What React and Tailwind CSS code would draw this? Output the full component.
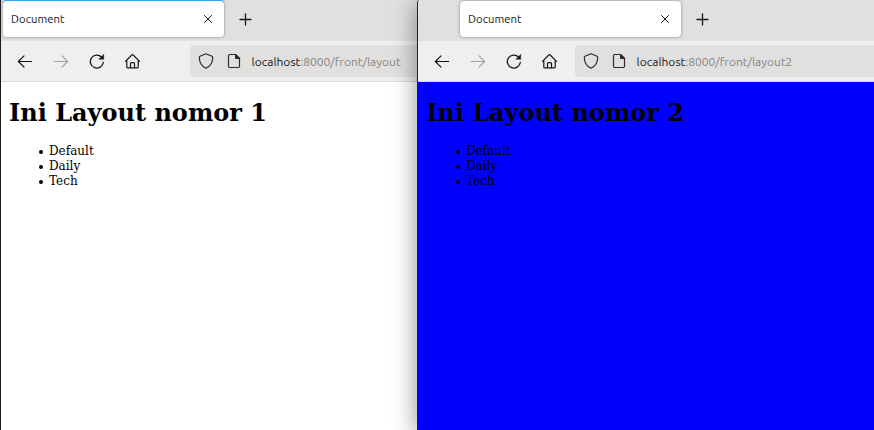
const stroke = {
  fill: 'none',
  stroke: 'currentColor',
  strokeWidth: 1.2,
  strokeLinecap: 'round',
  strokeLinejoin: 'round',
};

function Arrow({ className }) {
  return (
    <svg className={className} width="16" height="16" viewBox="0 0 16 16" {...stroke}>
      <path d="M1.5 8.5H14.7M7 2.9L1.4 8.5L7 14.1" />
    </svg>
  );
}

function Reload() {
  return (
    <svg width="16" height="16" viewBox="0 0 16 16" {...stroke} strokeWidth="1.3">
      <path d="M12.5 4A6.5 6.5 0 1 0 14.3 9.5" />
      <path d="M14.7 1.6V6.2H10.1Z" fill="currentColor" strokeWidth="0.5" />
    </svg>
  );
}

function Home() {
  return (
    <svg className="-ml-px" width="16" height="16" viewBox="0 0 16 16" {...stroke}>
      <path d="M1.5 8.3L7.8 2Q8.5 1.4 9.2 2L15.5 8.3M2.8 7.3V14Q2.8 14.9 3.7 14.9H13.3Q14.2 14.9 14.2 14V7.3" />
      <path d="M6.5 14.7V10.6Q6.5 9.6 7.5 9.6H9.5Q10.5 9.6 10.5 10.6V14.7" />
    </svg>
  );
}

function Shield() {
  return (
    <svg width="16" height="16" viewBox="0 0 16 16" {...stroke}>
      <path d="M8 .8L14 3.2Q14.7 3.5 14.7 4.3C14.7 9 12.5 13.2 8 15.2C3.5 13.2 1.3 9 1.3 4.3Q1.3 3.5 2 3.2Z" />
    </svg>
  );
}

function Page() {
  return (
    <svg width="16" height="16" viewBox="0 0 16 16" {...stroke}>
      <path d="M9.5 1.5H3.7Q2.5 1.5 2.5 2.7V13.3Q2.5 14.5 3.7 14.5H12.3Q13.5 14.5 13.5 13.3V5.5Z" />
      <path d="M9.5 1.5V5.5H13.5Z" fill="currentColor" strokeWidth="1" />
    </svg>
  );
}

function TabStrip({ right }) {
  return (
    <div className={`flex h-[41px] shrink-0 bg-[#e1e0df] ${right ? 'pl-[42px]' : 'pl-[2px]'}`}>
      <div
        className={`flex w-[221px] shrink-0 items-center justify-between rounded-[4px] bg-white pl-2 pr-[11px] shadow-[0_0_3px_rgba(0,0,0,0.45)] ${
          right ? 'mt-px h-[36px]' : 'h-[37px] border-t border-[#35a3f5]'
        }`}
      >
        <span className="-mt-px font-['Ubuntu','Noto_Sans',sans-serif] text-[11.3px] leading-4 tracking-[0.05px] text-[#15141a]">
          Document
        </span>
        <svg className="-mt-px" width="10" height="10" viewBox="0 0 10 10" {...stroke} strokeWidth="1">
          <path d="M1.5 1.5L8.5 8.5M8.5 1.5L1.5 8.5" />
        </svg>
      </div>
      <svg className="ml-[15px] mt-[13px] shrink-0" width="13" height="13" viewBox="0 0 13 13" {...stroke} strokeWidth="1.3">
        <path d="M6.5 1V12M1 6.5H12" />
      </svg>
    </div>
  );
}

function Toolbar({ right, path }) {
  return (
    <div className="flex h-[41px] shrink-0 items-center border-b border-[#dcdbda] bg-[#f0efee] pl-4">
      <div className="flex shrink-0 gap-5">
        <Arrow />
        <Arrow className="-scale-x-100 text-[#a2a1a1]" />
        <Reload />
        <Home />
      </div>
      <div
        className={`flex h-8 flex-1 items-center overflow-hidden rounded-l-[4px] bg-[#e1e0df] pl-2 text-[#2b2a33] ${
          right ? 'ml-[18px]' : 'ml-[50px]'
        }`}
      >
        <div className="flex shrink-0 gap-3">
          <Shield />
          <Page />
        </div>
        <span className="ml-[9.5px] mt-[2px] whitespace-nowrap font-['Ubuntu','Noto_Sans',sans-serif] text-[12px] leading-4 text-[#858483]">
          <span className="text-[#15141a]">localhost</span>
          {path}
        </span>
      </div>
    </div>
  );
}

function Item({ children }) {
  return (
    <li className="flex items-center gap-[6px]">
      <span className="mt-px size-[4px] rounded-full bg-black" />
      {children}
    </li>
  );
}

function BrowserWindow({ right, path, title }) {
  return (
    <section
      className={`flex h-full flex-col overflow-hidden border-l text-[#15141a] ${
        right
          ? 'relative w-[457px] rounded-tl-[3px] border-[#242424] shadow-[0_3px_24px_0px_rgba(0,0,0,0.45)]'
          : 'w-[417px] border-[#1b191b]'
      }`}
    >
      <TabStrip right={right} />
      <Toolbar right={right} path={path} />
      <main
        className={`flex-1 px-2 pt-[17px] font-['DejaVu_Serif',serif] text-black ${right ? 'bg-[#0000ff]' : 'bg-white'}`}
      >
        <h1 className="whitespace-nowrap text-[24px] font-bold leading-[28px]">{title}</h1>
        <ul className="mt-[17px] pl-[30px] text-[12px] leading-[15px]">
          <Item>Default</Item>
          <Item>Daily</Item>
          <Item>Tech</Item>
        </ul>
      </main>
    </section>
  );
}

export default function App() {
  return (
    <div className="flex h-[430px] w-[874px] overflow-hidden bg-[#cfcdcc]">
      <BrowserWindow path=":8000/front/layout" title="Ini Layout nomor 1" />
      <BrowserWindow right path=":8000/front/layout2" title="Ini Layout nomor 2" />
    </div>
  );
}
